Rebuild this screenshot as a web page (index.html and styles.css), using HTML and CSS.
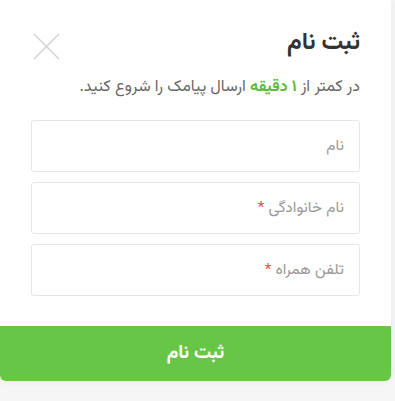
FILE: index.html
```html
<!DOCTYPE html>
<html lang="fa" dir="rtl">
<head>
  <meta charset="UTF-8" />
  <meta name="viewport" content="width=device-width, initial-scale=1.0"/>
  <title>ثبت نام</title>
  <link rel="stylesheet" href="styles.css">
</head>
<body>

  <div class="modal">
    <div class="modal-body">
      <div class="modal-head">
        <h2>ثبت نام</h2>
        <button class="close-btn" aria-label="بستن">
          <svg width="27" height="27" viewBox="0 0 27 27">
            <path d="M1 1 L26 26 M26 1 L1 26" stroke="#d4d4d4" stroke-width="1.6" fill="none"/>
          </svg>
        </button>
      </div>
      <p class="hint">در کمتر از <b>۱ دقیقه</b> ارسال پیامک را شروع کنید.</p>

      <form class="signup-form">
        <div class="field"><span class="ph">نام</span></div>
        <div class="field"><span class="ph">نام خانوادگی <i>*</i></span></div>
        <div class="field"><span class="ph">تلفن همراه <i>*</i></span></div>
      </form>
    </div>
    <button class="submit-btn">ثبت نام</button>
  </div>

</body>
</html>
```

FILE: styles.css
```css
* {
  margin: 0;
  padding: 0;
  box-sizing: border-box;
}

body {
  font-family: "Vazirmatn", "Noto Sans Arabic", "DejaVu Sans", sans-serif;
  background-color: #f6f6f7;
  color: #333;
  width: 395px;
  height: 401px;
  overflow: hidden;
}

.modal {
  width: 391px;
  margin-right: auto;
  background-color: #fff;
  border-radius: 0 0 6px 6px;
  box-shadow: 0 0 8px rgba(0, 0, 0, 0.06);
}

.modal-body {
  padding: 26px 31px 30px 31px;
}

.modal-head {
  display: flex;
  justify-content: space-between;
  align-items: center;
  height: 34px;
}

.modal-head h2 {
  font-size: 24px;
  font-weight: bold;
  color: #333;
}

.close-btn {
  background: none;
  border: none;
  width: 27px;
  height: 27px;
  margin-left: 2px;
  margin-top: 6px;
}

.hint {
  margin-top: 15px;
  font-size: 16px;
  color: #666;
}

.hint b {
  color: #5cbb3a;
}

.signup-form {
  margin-top: 20px;
  display: flex;
  flex-direction: column;
  gap: 10px;
}

.field {
  height: 52px;
  border: 1px solid #e6e6e6;
  border-radius: 3px;
  display: flex;
  align-items: center;
  padding: 0 15px;
}

.ph {
  font-size: 15.5px;
  color: #999;
}

.ph i {
  font-style: normal;
  color: #e0524d;
}

.submit-btn {
  display: block;
  width: 100%;
  height: 55px;
  background-color: #68c646;
  color: #fff;
  border: none;
  border-radius: 0 0 6px 6px;
  font-family: inherit;
  font-size: 19px;
  font-weight: bold;
}
```
